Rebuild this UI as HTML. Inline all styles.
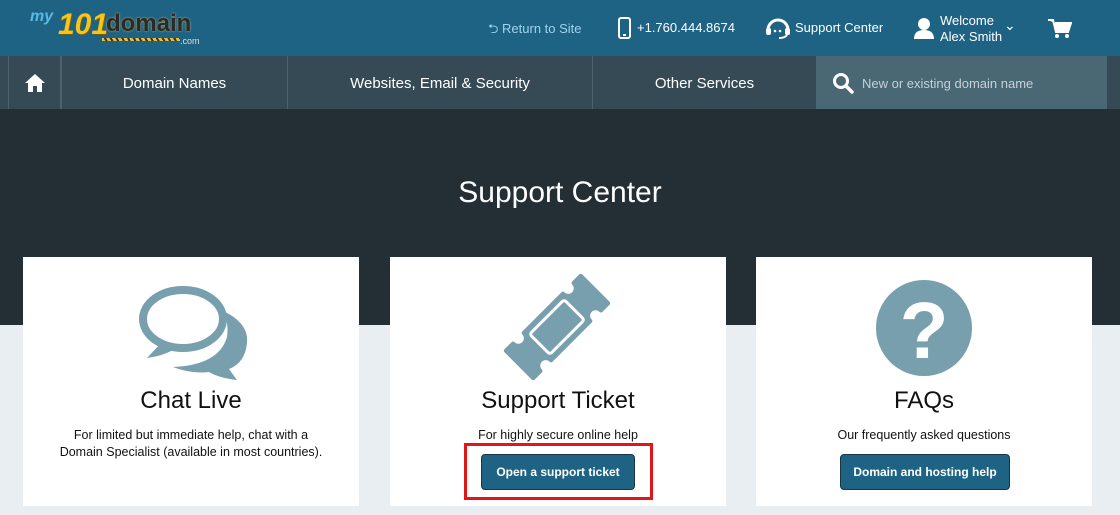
<!DOCTYPE html>
<html><head><meta charset="utf-8"><style>
*{margin:0;padding:0;box-sizing:border-box}
body{width:1120px;height:515px;overflow:hidden;font-family:"Liberation Sans",sans-serif;background:#e8eef2;position:relative}
.hdr{position:absolute;left:0;top:0;width:1120px;height:56px;background:#1e6384;color:#fff;font-size:13px}
.hdr .it{position:absolute;top:20px;white-space:nowrap}
.nav{position:absolute;left:0;top:56px;width:1120px;height:53px;background:#364a56;color:#fff;font-size:15px}
.nav .c{position:absolute;top:0;height:53px;line-height:55px;text-align:center;border-left:1px solid #4d606b}
.srch{position:absolute;left:816px;top:0;width:291px;height:53px;background:#4a6774;color:#c4d2d8;font-size:13px;line-height:55px;padding-left:46px}
.dark{position:absolute;left:0;top:109px;width:1120px;height:216px;background:#232f35}
h1{position:absolute;top:176px;width:1120px;text-align:center;color:#fff;font-weight:normal;font-size:30px}
.card{position:absolute;top:257px;width:336px;height:249px;background:#fff;text-align:center;color:#111}
.card h2{position:absolute;top:130px;width:100%;font-weight:normal;font-size:24px}
.card p{position:absolute;top:170px;width:100%;font-size:12.5px;line-height:17px}
.btn{position:absolute;top:197px;height:36px;background:#1e6384;border:1px solid #1a3644;border-radius:4px;color:#fff;font-weight:bold;font-size:12px;line-height:34px}
</style></head><body>
<div class="hdr">
 <div style="position:absolute;left:30px;top:10px;font-weight:bold;font-style:italic">
  <span style="color:#5bb8e6;font-size:16px;position:absolute;top:-2px">my</span>
  <span style="color:#f5c518;font-size:30px;position:absolute;left:28px;top:-2px;text-shadow:1px 1px 0 #6b5b1e">101</span>
  <span style="color:#2a2a2a;font-size:24px;position:absolute;left:76px;top:0;font-style:normal;text-shadow:0 0 2px #c9b55c">domain</span>
  <span style="color:#ddd;font-size:9px;position:absolute;left:150px;top:26px;font-style:normal;font-weight:normal">.com</span>
  <div style="position:absolute;left:72px;top:28px;width:78px;height:3px;background:repeating-linear-gradient(60deg,#e8c040 0 3px,#333 3px 5px)"></div>
 </div>
 <div class="it" style="left:488px;color:#9fd3ef">⮌ Return to Site</div>
 <svg style="position:absolute;left:618px;top:17px" width="13" height="22"><rect x="1" y="1" width="11" height="20" rx="2" fill="none" stroke="#fff" stroke-width="2"/><rect x="5" y="17" width="3" height="2" fill="#fff"/></svg>
 <div class="it" style="left:637px">+1.760.444.8674</div>
 <svg style="position:absolute;left:765px;top:17px" width="26" height="22"><path d="M3 13 A10 10 0 0 1 23 13" fill="none" stroke="#fff" stroke-width="3"/><rect x="1" y="11" width="5" height="7" rx="2" fill="#fff"/><rect x="20" y="11" width="5" height="7" rx="2" fill="#fff"/><path d="M22 18 Q20 21 14 21" stroke="#fff" stroke-width="2" fill="none"/><circle cx="10" cy="14" r="1.3" fill="#fff"/><circle cx="15" cy="14" r="1.3" fill="#fff"/></svg>
 <div class="it" style="left:795px">Support Center</div>
 <svg style="position:absolute;left:914px;top:17px" width="20" height="22"><circle cx="10" cy="7" r="6" fill="#fff"/><path d="M0 22 Q0 13 10 13 Q20 13 20 22Z" fill="#fff"/></svg>
 <div class="it" style="left:940px;top:13px;line-height:16px">Welcome<br>Alex Smith</div>
 <div class="it" style="left:1004px;top:17px;font-size:14px">⌄</div>
 <svg style="position:absolute;left:1048px;top:18px" width="24" height="21"><path d="M0 2 H5 L8 14 H20 L23 5 H7" fill="#fff" stroke="#fff" stroke-width="2"/><circle cx="9" cy="18" r="2" fill="#fff"/><circle cx="19" cy="18" r="2" fill="#fff"/></svg>
</div>
<div class="nav">
 <div class="c" style="left:8px;width:53px;border-right:1px solid #4d606b"><svg width="22" height="20" style="margin-top:17px"><path d="M11 1 L1 10 L4 10 L4 19 L9 19 L9 13 L13 13 L13 19 L18 19 L18 10 L21 10Z" fill="#fff"/></svg></div>
 <div class="c" style="left:61px;width:226px">Domain Names</div>
 <div class="c" style="left:287px;width:305px">Websites, Email &amp; Security</div>
 <div class="c" style="left:592px;width:224px">Other Services</div>
 <div class="srch">New or existing domain name
  <svg style="position:absolute;left:16px;top:16px" width="22" height="22"><circle cx="9" cy="9" r="6.5" fill="none" stroke="#fff" stroke-width="3"/><path d="M14 14 L20 20" stroke="#fff" stroke-width="3.5" stroke-linecap="round"/></svg>
 </div>
</div>
<div class="dark"></div>
<h1>Support Center</h1>
<div class="card" style="left:23px">
 <svg style="position:absolute;left:108px;top:28px" width="125" height="96"><ellipse cx="52" cy="34" rx="40" ry="29" fill="none" stroke="#789fae" stroke-width="8"/><path d="M30 58 L16 73 Q32 71 44 64Z" fill="#789fae"/><path d="M92 26 Q118 38 116 58 Q114 78 98 84 L106 95 Q88 93 78 87 Q60 89 42 82 Q88 80 96 52 Q98 38 92 26Z" fill="#789fae"/></svg>
 <h2>Chat Live</h2>
 <p>For limited but immediate help, chat with a<br>Domain Specialist (available in most countries).</p>
</div>
<div class="card" style="left:390px">
 <svg style="position:absolute;left:102px;top:5px" width="130" height="130"><g transform="translate(65 65) scale(0.84) rotate(45) translate(-65 -65)"><path d="M42 2 H88 V14 A9 9 0 0 0 88 32 V98 A9 9 0 0 0 88 116 V128 H42 V116 A9 9 0 0 0 42 98 V32 A9 9 0 0 0 42 14Z" fill="#789fae" stroke="#789fae" stroke-width="5" stroke-linejoin="round"/><rect x="48" y="36" width="34" height="58" fill="none" stroke="#fff" stroke-width="3.5" rx="3"/></g></svg>
 <h2>Support Ticket</h2>
 <p>For highly secure online help</p>
 <div class="btn" style="left:91px;width:154px">Open a support ticket</div>
</div>
<div style="position:absolute;left:464px;top:443px;width:189px;height:57px;border:3px solid #e0161b"></div>
<div class="card" style="left:756px">
 <svg style="position:absolute;left:120px;top:23px" width="96" height="96"><circle cx="48" cy="48" r="48" fill="#789fae"/><text x="48" y="78" text-anchor="middle" font-family="Liberation Sans" font-weight="bold" font-size="80" fill="#fff">?</text></svg>
 <h2>FAQs</h2>
 <p>Our frequently asked questions</p>
 <div class="btn" style="left:84px;width:170px">Domain and hosting help</div>
</div>
</body></html>
